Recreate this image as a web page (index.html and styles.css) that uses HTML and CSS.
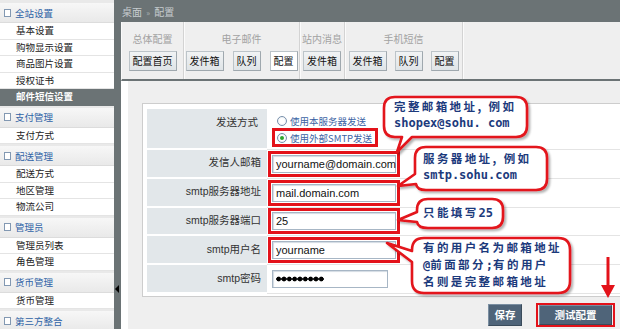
FILE: index.html
```html
<!DOCTYPE html>
<html lang="zh-CN">
<head>
<meta charset="utf-8">
<title>配置</title>
<link rel="stylesheet" href="styles.css">
</head>
<body>
<div class="app">
  <aside class="sidebar">
    <div class="sec">
      <div class="sec-h"><span class="ico"></span>全站设置</div>
      <div class="it">基本设置</div>
      <div class="it">购物显示设置</div>
      <div class="it">商品图片设置</div>
      <div class="it">授权证书</div>
      <div class="it on">邮件短信设置</div>
    </div>
    <div class="sec">
      <div class="sec-h"><span class="ico"></span>支付管理</div>
      <div class="it">支付方式</div>
    </div>
    <div class="sec">
      <div class="sec-h"><span class="ico"></span>配送管理</div>
      <div class="it">配送方式</div>
      <div class="it">地区管理</div>
      <div class="it">物流公司</div>
    </div>
    <div class="sec">
      <div class="sec-h"><span class="ico"></span>管理员</div>
      <div class="it">管理员列表</div>
      <div class="it">角色管理</div>
    </div>
    <div class="sec">
      <div class="sec-h"><span class="ico"></span>货币管理</div>
      <div class="it">货币管理</div>
    </div>
    <div class="sec">
      <div class="sec-h"><span class="ico"></span>第三方整合</div>
    </div>
  </aside>
  <div class="splitter"><span class="tri"></span></div>
  <main class="main">
    <div class="crumb">桌面 <span class="raquo">»</span> 配置</div>
    <div class="tabs">
      <div class="grp g1"><div class="gl">总体配置</div><div class="btns"><span class="tb">配置首页</span></div></div>
      <div class="grp g2"><div class="gl">电子邮件</div><div class="btns"><span class="tb">发件箱</span><span class="tb">队列</span><span class="tb cur">配置</span></div></div>
      <div class="grp g3"><div class="gl">站内消息</div><div class="btns"><span class="tb">发件箱</span></div></div>
      <div class="grp g4"><div class="gl">手机短信</div><div class="btns"><span class="tb">发件箱</span><span class="tb">队列</span><span class="tb">配置</span></div></div>
    </div>
    <div class="content">
      <div class="formbox">
        <div class="frow r1">
          <div class="lab lab-top">发送方式</div>
          <div class="val val-col">
            <div class="opt"><span class="radio"></span>使用本服务器发送</div>
            <div class="opt hl"><span class="radio chk"></span>使用外部SMTP发送</div>
          </div>
        </div>
        <div class="frow">
          <div class="lab">发信人邮箱</div>
          <div class="val"><span class="box hl"><span class="inp">yourname@domain.com</span></span></div>
        </div>
        <div class="frow">
          <div class="lab">smtp服务器地址</div>
          <div class="val"><span class="box hl"><span class="inp">mail.domain.com</span></span></div>
        </div>
        <div class="frow">
          <div class="lab">smtp服务器端口</div>
          <div class="val"><span class="box hl"><span class="inp">25</span></span></div>
        </div>
        <div class="frow">
          <div class="lab">smtp用户名</div>
          <div class="val"><span class="box hl"><span class="inp">yourname</span></span></div>
        </div>
        <div class="frow">
          <div class="lab">smtp密码</div>
          <div class="val"><span class="box"><span class="inp pwd"><span class="dots"></span></span></span></div>
        </div>
      </div>
      <div class="actions">
        <span class="btn b-save">保存</span>
        <span class="redbox"><span class="btn b-test">测试配置</span></span>
      </div>
    </div>
  </main>
</div>

<svg class="overlay" width="620" height="329" viewBox="0 0 620 329">
  <defs>
    <filter id="sh" x="-10%" y="-10%" width="130%" height="140%">
      <feDropShadow dx="2" dy="2" stdDeviation="1.2" flood-color="#000" flood-opacity="0.3"/>
    </filter>
  </defs>
  <g fill="#fff" stroke="#e3121a" stroke-width="2.6" stroke-linejoin="round" filter="url(#sh)">
    <path d="M395 97 H516 Q527 97 527 108 V126 Q527 137 516 137 H412 L397 152 L402 137 H395 Q384 137 384 126 V108 Q384 97 395 97 Z"/>
    <path d="M426 147 H536 Q547 147 547 158 V179 Q547 190 536 190 H426 Q417 190 416 184 L398 186 L415 174 V158 Q415 147 426 147 Z"/>
    <path d="M428 199 H492 Q503 199 503 210 V217 Q503 228 492 228 H428 Q418 228 417 222 L398 220 L417 212 V210 Q417 199 428 199 Z"/>
    <path d="M424 238 H558 Q570 238 570 250 V281 Q570 293 558 293 H424 Q412 293 412 281 V262 L387 243 L412 251 V250 Q412 238 424 238 Z"/>
  </g>
  <line x1="608" y1="257" x2="608" y2="288" stroke="#e3121a" stroke-width="3"/>
  <polygon points="601,285 615,285 608,298" fill="#e3121a"/>
</svg>

<div class="tip t1"><div class="ln">完整邮箱地址, 例如</div><div class="ln mono">shopex@sohu. com</div></div>
<div class="tip t2"><div class="ln">服务器地址, 例如</div><div class="ln mono">smtp.sohu.com</div></div>
<div class="tip t3"><div class="ln">只能填写<span class="mono">25</span></div></div>
<div class="tip t4"><div class="ln">有的用户名为邮箱地址</div><div class="ln"><span class="mono">@</span>前面部分<span class="mono">;</span>有的用户</div><div class="ln">名则是完整邮箱地址</div></div>
</body>
</html>
```

FILE: styles.css
```css
* { box-sizing: border-box; margin: 0; padding: 0; }
html, body { width: 620px; height: 329px; overflow: hidden; }
body {
  font-family: "Noto Sans CJK SC", "Liberation Sans", sans-serif;
  font-size: 10px;
  color: #222;
  background: #fff;
  position: relative;
}
.app { display: flex; height: 329px; }

/* sidebar */
.sidebar { width: 114px; flex: none; background: #e9e9e9; padding-top: 3px; overflow: hidden; }
.sec { margin-bottom: 2px; }
.sec-h {
  height: 20px; display: flex; align-items: center; padding-left: 4px;
  color: #2f63a6; font-size: 9.5px;
  background: linear-gradient(#f7f7f7, #e9e9e9);
  border-bottom: 1px solid #dcdcdc;
}
.ico { width: 7px; height: 8px; border: 1px solid #8298b2; background: #fff; margin-right: 4px; flex: none; }
.it {
  height: 16.5px; line-height: 15.5px; padding-left: 16px; font-size: 9.5px;
  background: #fff; border-bottom: 1px solid #e4e4e4; color: #222;
}
.it.on { background: #6b7375; color: #fff; font-weight: bold; border-bottom-color: #6b7375; }

/* splitter */
.splitter { width: 7px; flex: none; background: #6b7375; display: flex; flex-direction: column; }
.tri {
  margin-top: 285px; margin-left: 1px; width: 0; height: 0;
  border-top: 4px solid transparent; border-bottom: 4px solid transparent; border-right: 4px solid #000;
}

/* main */
.main { flex: 1; min-width: 0; display: flex; flex-direction: column; overflow: hidden; }
.crumb { height: 22px; flex: none; background: #6b7375; color: #c7cccf; font-size: 10px; line-height: 24px; padding-left: 1px; }
.raquo { font-size: 8px; margin: 0 2px; color: #aeb4b7; }

.tabs {
  height: 59px; flex: none; display: flex; background: #efefef;
  border-bottom: 2px solid #6b7375; border-left: 1px solid #fafafa;
}
.grp {
  display: flex; flex-direction: column; align-items: center; padding-top: 10px;
  border-right: 1px solid #d3d3d3; box-shadow: 1px 0 0 #fbfbfb;
}
.g1 { width: 62px; }
.g2 { width: 116px; }
.g3 { width: 45px; }
.g4 { width: 118px; }
.gl { height: 14px; line-height: 14px; color: #a2a2a2; font-size: 10px; margin-bottom: 5px; }
.btns { display: flex; gap: 9px; }
.g4 .btns { gap: 8px; }
.tb {
  height: 20px; line-height: 18px; padding: 0 3px; font-size: 10px; color: #111;
  border: 1px solid #bcc4c9; border-right-color: #9fa8ae; border-bottom-color: #9fa8ae;
  background: linear-gradient(#f1f3f4, #dfe4e7);
}
.tb.cur { background: #fff; }

/* content */
.content { flex: 1; background: #efefef; border-left: 7px solid #fff; padding: 22px 0 0 14px; }
.formbox { margin-right: -30px; border: 1px solid #cdcdcd; background: #fff; padding: 5px 0 2px 4px; }
.frow { display: flex; height: 28.8px; }
.frow.r1 { height: 41px; }
.lab {
  width: 120px; flex: none; background: #e2e7ea; border-bottom: 2px solid #fff;
  display: flex; align-items: center; justify-content: flex-end; padding: 0 6px 3px 0;
  font-size: 10.5px; color: #333; font-family: "Liberation Sans", "Noto Sans CJK SC", sans-serif;
}
.lab-top { align-items: flex-start; padding: 5px 9px 0 0; }
.val { flex: 1; display: flex; align-items: center; padding-left: 1px; border-bottom: 1px solid #e4e4e4; }
.val-col { flex-direction: column; align-items: flex-start; justify-content: flex-start; padding-top: 5px; }

.opt { display: flex; align-items: center; gap: 3px; height: 14px; padding-left: 9px; color: #3b63a4; font-size: 9.5px; }
.opt.hl { height: 19px; margin-left: 4px; padding-left: 2px; padding-right: 3px; border: 3px solid #e3121a; }
.radio {
  width: 10px; height: 10px; border-radius: 50%; border: 1px solid #7890ab;
  background: radial-gradient(#fff 40%, #dfe6ee); display: flex; align-items: center; justify-content: center;
}
.radio.chk::after { content: ""; width: 4px; height: 4px; border-radius: 50%; background: #2ea52e; }

.box { display: flex; padding: 1px; border: 3px solid transparent; }
.box.hl { border-color: #e3121a; }
.inp {
  width: 124px; height: 18px; border: 1px solid #a7b6c5; box-shadow: inset 1px 1px 1px #d3dbe3;
  background: #fff; font: 11px "Liberation Sans", sans-serif; color: #111; line-height: 16px; padding-left: 3px;
}
.inp.pwd { width: 116px; display: flex; align-items: center; }
.dots {
  width: 48px; height: 6px;
  background: radial-gradient(circle, #000 2.2px, transparent 2.7px) 0 0 / 5.33px 6px repeat-x;
}

.actions { display: flex; justify-content: flex-end; align-items: center; gap: 14px; padding-right: 5px; margin-top: 6px; }
.btn {
  display: block; background: #4f6479; color: #fff; font-weight: bold; font-size: 10.5px;
  border: 1px solid #7a8ea1; border-right-color: #3a4b5b; border-bottom-color: #3a4b5b; text-align: center;
}
.b-save { width: 34px; height: 22px; line-height: 20px; }
.b-test { width: 73px; height: 20px; line-height: 18px; }
.redbox { border: 2px solid #e3121a; display: block; padding: 0 1px; }

/* overlays */
.overlay { position: absolute; left: 0; top: 0; pointer-events: none; }
.tip {
  position: absolute; color: #1c3a7c; font-weight: bold; font-size: 11.5px; letter-spacing: 2.4px;
  white-space: nowrap; font-family: "Noto Sans CJK SC", sans-serif;
  display: flex; flex-direction: column;
}
.ln { height: 17px; line-height: 17px; }
.mono { font-family: "DejaVu Sans Mono", monospace; font-size: 12px; letter-spacing: 0; }
.t1 { left: 394px; top: 98px; }
.t2 { left: 423px; top: 150px; }
.t3 { left: 423px; top: 204px; }
.t4 { left: 423px; top: 239px; }
```
